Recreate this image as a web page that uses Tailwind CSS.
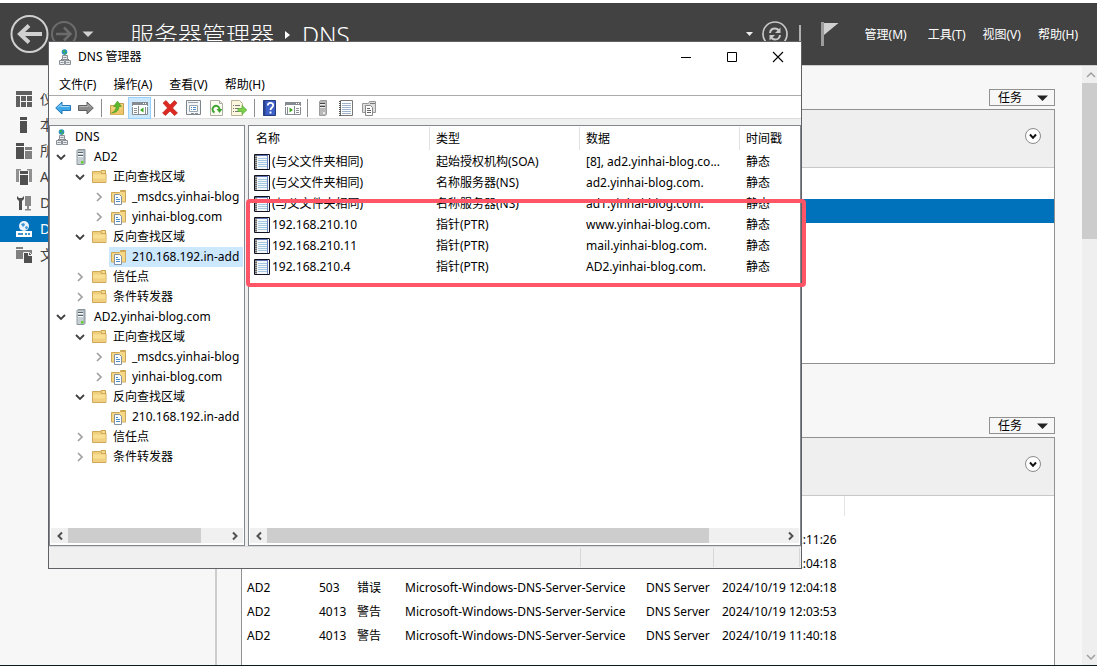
<!DOCTYPE html>
<html lang="zh-CN">
<head>
<meta charset="utf-8">
<title>服务器管理器 - DNS</title>
<meta name="viewport" content="width=device-width, initial-scale=1">
<script src="https://cdn.jsdelivr.net/npm/@tailwindcss/browser@4"></script>
</head>
<body class="relative flex h-screen flex-col overflow-hidden border-t-3 border-b border-t-white border-b-[#0a1a20] bg-[#f7f7f7] font-['Noto_Sans','Noto_Sans_CJK_SC',sans-serif] text-xs text-black">

<svg class="hidden" aria-hidden="true">
  <symbol id="dns" viewBox="0 0 16 16">
    <circle cx="7.500" cy="3" r="2.800" fill="#2b8fc4"/><path d="M5.500 1.600L7.500 1l1 1.500-2 1.500zM7.500 4.500l2-1 .300 1.300-1.500 1z" fill="#3cb54a"/>
    <path d="M7.500 5.500v1M4 10.500h8" stroke="#777"/><path d="M5.500 6.500h5v4h-5z" fill="#e8eaec" stroke="#8a9096"/><path d="M2.500 11.500h5v4h-5zM8.500 11.500h5v4h-5z" fill="#e8eaec" stroke="#8a9096"/><path d="M6.500 8.500h3M3.500 13.500h3M9.500 13.500h3" stroke="#9098a0"/>
  </symbol>
  <symbol id="server" viewBox="0 0 16 16">
    <path d="M4 1.500L5 .500h7v14l-1 1H4z" fill="#a9b4bb" stroke="#8b979e"/><path d="M4.500 2h6v13h-6z" fill="#c5ced3"/><path d="M5 3.500h5M5 6.500h5" stroke="#56646e"/><path d="M5 4.500h5M5 7.500h5" stroke="#fff"/><path d="M8 12h2.500v2.500H8z" fill="#62d32c"/>
  </symbol>
  <symbol id="folder" viewBox="0 0 16 16">
    <path d="M9 1.500h4.500v3H9z" fill="#f3dc8f" stroke="#c9a24a"/><path d="M.500 2.500h8l1 2h4.500v9H.500z" fill="#f0d07c" stroke="#cfa85a"/><path d="M1 5.500h12.500V13H1z" fill="#f8df94"/><path d="M1 9.500h12.500V13H1z" fill="#f0d080"/>
  </symbol>
  <symbol id="zone" viewBox="0 0 16 16">
    <path d="M9.500 1.500h5v3h-5z" fill="#f3dc8f" stroke="#c9a24a"/><path d="M.500 3.500h8l1-1h5v10.500H.500z" fill="#f4d888" stroke="#cfa85a"/><path d="M3.500 5.500h5l2 2v8h-7z" fill="#fff" stroke="#8392a5"/><path d="M5 8.500h2M5 10.500h4M5 12.500h4" stroke="#4a8ccc"/>
  </symbol>
  <symbol id="record" viewBox="0 0 16 16">
    <path d="M.500.500h15v15H.500z" fill="#f5f8fb" stroke="#10131f"/><path d="M3 1h11v1H3z" fill="#5f74b8"/><path d="M13.500 1v14" stroke="#6d86c4"/><path d="M4 4.500h9M4 6.500h9M4 8.500h9M4 10.500h9M4 12.500h9" stroke="#a3c8e2"/><path d="M2 1v14" stroke="#aaa" stroke-width="2"/><path d="M2 1v14" stroke="#666" stroke-width="2" stroke-dasharray="1 1"/>
  </symbol>
  <symbol id="open" viewBox="0 0 16 16"><path d="M4 6l4 4 4-4" fill="none" stroke="#404040" stroke-width="1.800"/></symbol>
  <symbol id="closed" viewBox="0 0 16 16"><path d="M6 4l4 4-4 4" fill="none" stroke="#a0a0a0" stroke-width="1.700"/></symbol>
  <symbol id="left" viewBox="0 0 16 16"><path d="M10.500 4.500L7 8l3.500 3.500" fill="none" stroke="#505050" stroke-width="2"/></symbol>
  <symbol id="right" viewBox="0 0 16 16"><path d="M6.500 4.500L10 8l-3.500 3.500" fill="none" stroke="#505050" stroke-width="2"/></symbol>
  <symbol id="expand" viewBox="0 0 16 16"><circle cx="8" cy="8" r="7.500" fill="#fff" stroke="#8a8a8a"/><path d="M5 6.500L8 9.800l3-3.300" fill="none" stroke="#111" stroke-width="2"/></symbol>
</svg>

<!-- Server Manager header -->
<header class="flex h-[63px] shrink-0 items-center border-b border-[#cfcfcf] bg-[#424242] pr-[19px] pl-[10px] text-white">
  <button aria-label="后退"><svg class="size-10" viewBox="0 0 40 40" fill="none"><circle cx="19.500" cy="20" r="18" stroke="#d0d0d0" stroke-width="2"/><path d="M9 20h23M19 11.500L10 20l9 8.500" stroke="#d0d0d0" stroke-width="4"/></svg></button>
  <button aria-label="前进"><svg class="size-7" viewBox="0 0 28 28" fill="none"><circle cx="14" cy="14" r="12" stroke="#6c6c6c" stroke-width="2"/><path d="M6 14h15M14 7.500l6.500 6.500-6.500 6.500" stroke="#6c6c6c" stroke-width="2.500"/></svg></button>
  <button class="ml-1" aria-label="历史记录"><svg class="h-[6px] w-3" viewBox="0 0 12 6"><path d="M.500.500h11L6 6z" fill="#d0d0d0"/></svg></button>
  <h1 class="ml-9 flex items-center pt-px text-2xl leading-8 font-light">服务器管理器<svg class="ml-[11px] h-2 w-[5px]" viewBox="0 0 5 8"><path d="M0 0l5 4-5 4z" fill="#fff"/></svg><span class="ml-3">DNS</span></h1>
  <div class="ml-auto flex items-center">
    <button aria-label="更多"><svg class="h-1 w-[7px]" viewBox="0 0 7 4"><path d="M0 0h7L3.500 4z" fill="#eee"/></svg></button>
    <button class="ml-[9px]" aria-label="刷新"><svg class="size-[26px]" viewBox="0 0 26 26" fill="none"><circle cx="13" cy="13" r="12" stroke="#c8c8c8" stroke-width="1.700"/><path d="M8 12c.300-3 2.500-4.500 5-4.500 2 0 3 .800 4 2M18 14c-.300 3-2.500 4.500-5 4.500-2 0-3-.800-4-2" stroke="#c8c8c8" stroke-width="2"/><path d="M18.500 6.500V12H13zM7.500 19.500V14H13z" fill="#c8c8c8"/></svg></button>
    <span class="ml-[11px] h-[18px] w-0.5 bg-[#b0b0b0]"></span>
    <button class="ml-5" aria-label="通知"><svg class="h-6 w-[18px]" viewBox="0 0 18 24"><path d="M0 0h3v24H0z" fill="#9c9c9c"/><path d="M3 1h14.500L3 13z" fill="#d0d0d0"/></svg></button>
    <nav class="ml-[26px] flex gap-[17px] pt-0.5 leading-5">
      <button class="mr-1">管理(M)</button><button>工具(T)</button><button>视图(V)</button><button>帮助(H)</button>
    </nav>
  </div>
</header>

<div class="flex min-h-0 flex-1">
  <aside class="w-[217px] shrink-0 border-r-2 border-[#cdcdcd] pt-5">
    <ul class="text-sm leading-[26px] text-[#404040]">
      <li><a href="#" class="flex h-[26px] items-center gap-2 pl-4"><svg class="size-4" viewBox="0 0 16 16" fill="#606060"><path d="M0 0h16v4H0zM0 5h4v11H0zM5 5h5v5H5zM11 5h5v5h-5zM5 11h5v5H5zM11 11h5v5h-5z"/></svg>仪表板</a></li>
      <li><a href="#" class="flex h-[26px] items-center gap-2 pl-4"><svg class="size-4" viewBox="0 0 16 16" fill="#505050"><path d="M4 0h7v3H4zM4 4h7v12H4z"/></svg>本地服务器</a></li>
      <li><a href="#" class="flex h-[26px] items-center gap-2 pl-4"><svg class="size-4" viewBox="0 0 16 16" fill="#505050"><path d="M0 0h8v3H0zM0 4h8v12H0z"/><path d="M9 4h7v3H9zM9 8h7v8H9z" fill="#808080"/></svg>所有服务器</a></li>
      <li><a href="#" class="flex h-[26px] items-center gap-2 pl-4"><svg class="size-4" viewBox="0 0 16 16" fill="#505050"><path d="M4 2h8v3H4zM4 6h8v10H4z"/><path d="M0 0h5v1.500H3V13H0zM16 0h-5v1.500h2V13h3z" fill="#909090"/></svg>AD DS</a></li>
      <li><a href="#" class="flex h-[26px] items-center gap-2 pl-4"><svg class="size-4" viewBox="0 0 16 16" fill="#505050"><path d="M1 1v3l2 2v9h3V6l2-2V1L6 3H3z"/><path d="M9 1h6v10H9zM11 11h2v3h2v1.500H9V14h2z" fill="#888"/></svg>DHCP</a></li>
      <li><a href="#" aria-current="page" class="flex h-[26px] items-center gap-2 bg-[#0072bc] pl-4 text-white"><svg class="size-4" viewBox="0 0 16 16"><circle cx="8" cy="5" r="5" fill="#e8f3fb"/><path d="M5 3l3-1 1 2-2 2zM9 6l2-1 1 2-2 1.500z" fill="#3a94d0"/><path d="M0 10h16v6H0z" fill="#fff"/><path d="M2 13h5M9 13h2M12 13h2" stroke="#0072bc" stroke-width="1.500"/></svg>DNS</a></li>
      <li><a href="#" class="flex h-[26px] items-center gap-2 pl-4"><svg class="size-4" viewBox="0 0 16 16"><path d="M0 0h7v2H0zM0 3h16v9H0z" fill="#808080"/><path d="M7.500 5.500h6l3 3v8h-9z" fill="#505050" stroke="#f7f7f7"/><path d="M12.500 5.500v3H16" fill="none" stroke="#f7f7f7"/></svg>文件和存储服务</a></li>
    </ul>
  </aside>

  <main class="flex min-w-0 flex-1 flex-col bg-[#f7f7f7] pt-[23px] pr-[27px] pl-6">
    <button class="flex h-[17px] w-[66px] shrink-0 items-center justify-between self-end border border-[#919191] pr-[6px] pl-2 leading-4">任务<svg class="h-[6px] w-[11px]" viewBox="0 0 11 6"><path d="M0 .500h11L5.500 6z" fill="#222"/></svg></button>
    <section class="mt-[3px] h-[255px] shrink-0 border border-[#919191] bg-white" aria-label="服务器">
      <div class="flex h-[58px] items-center justify-end border-b border-[#c8c8c8] bg-[#efefef] pr-[13px] pb-[6px]"><button aria-label="展开"><svg class="size-4"><use href="#expand"/></svg></button></div>
      <div class="mt-[31px] h-6 bg-[#0072bc]"></div>
    </section>

    <button class="mt-[53px] flex h-[17px] w-[66px] shrink-0 items-center justify-between self-end border border-[#919191] pr-[6px] pl-2 leading-4">任务<svg class="h-[6px] w-[11px]" viewBox="0 0 11 6"><path d="M0 .500h11L5.500 6z" fill="#222"/></svg></button>
    <section class="mt-[3px] min-h-0 flex-1 overflow-hidden border border-b-0 border-[#919191] bg-white" aria-label="事件">
      <div class="flex h-[58px] items-center justify-end border-b border-[#c8c8c8] bg-[#efefef] pr-[13px] pb-[6px]"><button aria-label="展开"><svg class="size-4"><use href="#expand"/></svg></button></div>
      <div class="h-8"><div class="h-5 w-[603px] border-r border-[#e4e4e4]"></div></div>
      <table class="w-full table-fixed border-collapse text-left whitespace-nowrap">
        <colgroup><col class="w-[77px]"><col class="w-[38px]"><col class="w-12"><col class="w-[241px]"><col class="w-[76px]"><col></colgroup>
        <tbody>
          <tr class="h-6"><td class="pl-[5px]">AD2</td><td>4013</td><td>警告</td><td>Microsoft-Windows-DNS-Server-Service</td><td>DNS Server</td><td>2024/10/19 12:11:26</td></tr>
          <tr class="h-6"><td class="pl-[5px]">AD2</td><td>503</td><td>错误</td><td>Microsoft-Windows-DNS-Server-Service</td><td>DNS Server</td><td>2024/10/19 12:04:18</td></tr>
          <tr class="h-6"><td class="pl-[5px]">AD2</td><td>503</td><td>错误</td><td>Microsoft-Windows-DNS-Server-Service</td><td>DNS Server</td><td>2024/10/19 12:04:18</td></tr>
          <tr class="h-6"><td class="pl-[5px]">AD2</td><td>4013</td><td>警告</td><td>Microsoft-Windows-DNS-Server-Service</td><td>DNS Server</td><td>2024/10/19 12:03:53</td></tr>
          <tr class="h-6"><td class="pl-[5px]">AD2</td><td>4013</td><td>警告</td><td>Microsoft-Windows-DNS-Server-Service</td><td>DNS Server</td><td>2024/10/19 11:40:18</td></tr>
        </tbody>
      </table>
    </section>
  </main>

  <div class="flex w-[15px] shrink-0 flex-col bg-[#efefef]" aria-hidden="true">
    <svg class="h-[17px] w-[15px] shrink-0" viewBox="0 0 15 17"><path d="M5 11l4-4 4 4" fill="none" stroke="#a0a0a0" stroke-width="1.500"/></svg>
    <div class="h-[156px] bg-[#cccccc]"></div>
    <svg class="mt-auto h-[17px] w-[15px] shrink-0" viewBox="0 0 15 17"><path d="M5 7l4 4 4-4" fill="none" stroke="#a0a0a0" stroke-width="1.500"/></svg>
  </div>
</div>

<!-- DNS Manager window -->
<div role="dialog" aria-label="DNS 管理器" class="absolute top-[38px] left-12 flex h-[528px] w-[754px] flex-col border border-[#5f6165] bg-white">
  <div class="flex h-[30px] shrink-0 items-center pr-[17px] pb-px pl-2">
    <svg class="size-4"><use href="#dns"/></svg>
    <h2 class="ml-[5px] pt-px leading-5">DNS 管理器</h2>
    <div class="ml-auto flex items-center gap-[34px]">
      <button aria-label="最小化"><svg class="h-3 w-3" viewBox="0 0 12 12"><path d="M1 6.500h10" stroke="#000"/></svg></button>
      <button aria-label="最大化"><svg class="h-3 w-3" viewBox="0 0 12 12"><path d="M1.500 1.500h9v9h-9z" fill="none" stroke="#000"/></svg></button>
      <button aria-label="关闭"><svg class="h-3 w-3" viewBox="0 0 12 12"><path d="M1 1l10 10M11 1L1 11" stroke="#000" stroke-width="1.100"/></svg></button>
    </div>
  </div>
  <nav class="flex h-6 shrink-0 items-center gap-[17px] border-b border-[#ababab] pt-0.5 pl-[10px] leading-5">
    <button>文件(F)</button><button>操作(A)</button><button>查看(V)</button><button>帮助(H)</button>
  </nav>
  <div class="flex h-[23px] shrink-0 items-center border-b border-[#dcdcdc] pt-px pl-0.5">
    <button class="flex w-[23px] justify-center" aria-label="后退"><svg class="size-4" viewBox="0 0 16 16"><path d="M.700 8L7 2v3.500h8.500v5H7V14z" fill="#3fa9e8" stroke="#2477b8"/><path d="M3 7.500L6 4.500v2h8.500" fill="none" stroke="#a5dcfa"/></svg></button>
    <button class="flex w-[23px] justify-center" aria-label="前进"><svg class="size-4" viewBox="0 0 16 16"><path d="M15.300 8L9 2v3.500H.500v5H9V14z" fill="#8c8c8c" stroke="#5e5e5e"/><path d="M13 7.500L10 4.500v2H1.500" fill="none" stroke="#b8b8b8"/></svg></button>
    <span class="flex w-2 justify-center"><span class="h-[18px] w-px bg-[#8d8d8d]"></span></span>
    <button class="flex w-[23px] justify-center" aria-label="向上"><svg class="size-4" viewBox="0 0 16 16"><path d="M1.500 5.500h5l1.500-2h6.500v11h-13z" fill="#f2d27c" stroke="#c79f4a"/><path d="M2 9.500h12v5H2z" fill="#eec66a"/><path d="M2.500 13c3-1 4.500-3.500 4.500-6.500H4.500L8.500 1l4 5.500H10C10 10.500 7 13 2.500 13z" fill="#5cb82c" stroke="#3f931c" stroke-width=".500"/></svg></button>
    <button aria-pressed="true" class="flex h-[22px] w-[23px] items-center justify-center border border-[#99d1ff] bg-[#cce8ff]" aria-label="显示控制台树"><svg class="size-4 shrink-0" viewBox="0 0 16 16"><path d="M.500 2.500h15v12H.500z" fill="#fff" stroke="#858b91"/><path d="M0 2h16v3H0z" fill="#858b91"/><path d="M11 3.500h1M13 3.500h1M0 6.500h16" stroke="#fff"/><path d="M6.500 6v8" stroke="#858b91"/><path d="M2 8.500h3M2 10.500h3M2 12.500h3M13.500 7v7" stroke="#8a8f96"/><path d="M11.500 7.500v5L8 10z" fill="#3da51f"/></svg></button>
    <span class="flex w-[7px] justify-center"><span class="h-[18px] w-px bg-[#8d8d8d]"></span></span>
    <button class="flex w-[23px] justify-center" aria-label="删除"><svg class="size-4" viewBox="0 0 16 16"><path d="M1 3l3-2.500L8 5l4.500-4.500L15 3l-4.500 5L15.500 13 12.500 15.500 8 11l-4.500 4.500L.500 13 5.500 8z" fill="#dc2a22" stroke="#b31712" stroke-width=".600"/></svg></button>
    <button class="flex w-[23px] justify-center" aria-label="属性"><svg class="size-4" viewBox="0 0 16 16"><path d="M1.500.500h14v14h-14z" fill="#f4f5f6" stroke="#7d858c"/><path d="M3 2.500h10M4.500 5.500h8v6h-8z" fill="#fff" stroke="#9aa4ad"/><path d="M6 7.500h1M8 7.500h3M6 9.500h1M8 9.500h3" stroke="#4a8ccc"/><path d="M6 13.500h3M10 13.500h3" stroke="#8a949c"/></svg></button>
    <button class="flex w-[23px] justify-center" aria-label="刷新"><svg class="size-4" viewBox="0 0 16 16"><path d="M2.500.500h9l3 3v12h-12z" fill="#fdfcf4" stroke="#b0aea0"/><path d="M11.500.500v3h3" fill="#ddd" stroke="#b0aea0"/><path d="M6.500 12.500A3.500 3.500 0 1 1 11.500 9" fill="none" stroke="#3da52f" stroke-width="2"/><path d="M8.500 9h6l-3 4z" fill="#3da52f"/></svg></button>
    <button class="flex w-[23px] justify-center" aria-label="导出列表"><svg class="size-4" viewBox="0 0 16 16"><path d="M.500.500h8l3 3v12H.500z" fill="#fbf7de" stroke="#b9b294"/><path d="M2 5.500h1M4 5.500h5M2 8.500h1M4 8.500h4M2 11.500h1M4 11.500h4" stroke="#777"/><path d="M7 8.500h4V5.500l4.800 4.500-4.800 4.500v-3H7z" fill="#7fd14d" stroke="#4da52c" stroke-width=".700"/></svg></button>
    <span class="flex w-2 justify-center"><span class="h-[18px] w-px bg-[#8d8d8d]"></span></span>
    <button class="flex w-[23px] justify-center" aria-label="帮助"><svg class="size-4" viewBox="0 0 16 16"><path d="M1.500.500h12v15h-12z" fill="#3d5fc8" stroke="#25397f"/><path d="M1.500.500h2v15h-2z" fill="#2a438f"/><path d="M5.800 5.500C5.800 2 11.200 2 11.200 5.300 11.200 7.500 8.500 7.500 8.500 10" fill="none" stroke="#fff" stroke-width="1.800"/><path d="M7.500 11.500h2v2h-2z" fill="#fff"/></svg></button>
    <button class="flex w-[23px] justify-center" aria-label="显示操作窗格"><svg class="size-4" viewBox="0 0 16 16"><path d="M.500 2.500h15v12H.500z" fill="#fff" stroke="#858b91"/><path d="M0 2h16v3H0z" fill="#858b91"/><path d="M11 3.500h1M13 3.500h1M0 6.500h16" stroke="#fff"/><path d="M9.500 6v8M2.500 7v7" stroke="#858b91"/><path d="M11 8.500h3M11 10.500h3M11 12.500h3" stroke="#8a8f96"/><path d="M4.500 7.500v5L8 10z" fill="#3da51f"/></svg></button>
    <span class="flex w-[7px] justify-center"><span class="h-[18px] w-px bg-[#8d8d8d]"></span></span>
    <button class="flex w-[23px] justify-center" aria-label="服务器"><svg class="size-4" viewBox="0 0 16 16"><path d="M4.500 1.500l1-1h6v14l-1 1h-6z" fill="#b8b8b8" stroke="#9c9c9c"/><path d="M5 3.500h5M5 6.500h5" stroke="#444"/><path d="M5 4.500h5M5 7.500h5" stroke="#eee"/><path d="M8 12h2v2H8z" fill="#e8e8e8"/></svg></button>
    <button class="flex w-[23px] justify-center" aria-label="记录"><svg class="size-4" viewBox="0 0 16 16"><path d="M2.500.500h12v15h-12z" fill="#fff" stroke="#777"/><path d="M4 3.500h9M4 5.500h9M4 7.500h9M4 9.500h9M4 11.500h9M4 13.500h9" stroke="#9db4cc"/><path d="M2 1v15" stroke="#555" stroke-width="2" stroke-dasharray="1 1"/></svg></button>
    <button class="flex w-[23px] justify-center" aria-label="区域"><svg class="size-4" viewBox="0 0 16 16"><path d="M1.500 3.500h6l1-2h6v11h-13z" fill="#dedede" stroke="#999"/><path d="M9 3.500h5" stroke="#777"/><path d="M4.500 5.500h5l2 2v8h-7z" fill="#fff" stroke="#888"/><path d="M6 8.500h3M6 10.500h4M6 12.500h4" stroke="#666"/></svg></button>
  </div>

  <div class="flex min-h-0 flex-1 gap-[3px] bg-[#f0f0f0] pt-[6px]">
    <div class="flex w-[196px] shrink-0 flex-col overflow-hidden border border-[#828790] bg-white">
      <ul role="tree" class="flex-1 pt-px leading-5 whitespace-nowrap">
        <li role="treeitem" class="flex h-5 items-center gap-[5px] pl-1"><svg class="size-4 shrink-0"><use href="#dns"/></svg>DNS</li>
        <li role="treeitem" class="flex h-5 items-center gap-0.5 pl-[3px]"><svg class="size-4 shrink-0"><use href="#open"/></svg><span class="flex items-center gap-[5px] pl-0.5"><svg class="size-4 shrink-0"><use href="#server"/></svg>AD2</span></li>
        <li role="treeitem" class="flex h-5 items-center gap-0.5 pl-[22px]"><svg class="size-4 shrink-0"><use href="#open"/></svg><span class="flex items-center gap-[5px] pl-0.5"><svg class="size-4 shrink-0"><use href="#folder"/></svg>正向查找区域</span></li>
        <li role="treeitem" class="flex h-5 items-center gap-0.5 pl-[41px]"><svg class="size-4 shrink-0"><use href="#closed"/></svg><span class="flex w-[134px] items-center gap-[5px] overflow-hidden pl-0.5"><svg class="size-4 shrink-0"><use href="#zone"/></svg>_msdcs.yinhai-blog</span></li>
        <li role="treeitem" class="flex h-5 items-center gap-0.5 pl-[41px]"><svg class="size-4 shrink-0"><use href="#closed"/></svg><span class="flex items-center gap-[5px] pl-0.5"><svg class="size-4 shrink-0"><use href="#zone"/></svg>yinhai-blog.com</span></li>
        <li role="treeitem" class="flex h-5 items-center gap-0.5 pl-[22px]"><svg class="size-4 shrink-0"><use href="#open"/></svg><span class="flex items-center gap-[5px] pl-0.5"><svg class="size-4 shrink-0"><use href="#folder"/></svg>反向查找区域</span></li>
        <li role="treeitem" aria-selected="true" class="flex h-5 items-center pl-[59px]"><span class="flex w-[134px] items-center gap-[5px] overflow-hidden bg-[#cce8ff] pl-0.5"><svg class="size-4 shrink-0"><use href="#zone"/></svg>210.168.192.in-add</span></li>
        <li role="treeitem" class="flex h-5 items-center gap-0.5 pl-[22px]"><svg class="size-4 shrink-0"><use href="#closed"/></svg><span class="flex items-center gap-[5px] pl-0.5"><svg class="size-4 shrink-0"><use href="#folder"/></svg>信任点</span></li>
        <li role="treeitem" class="flex h-5 items-center gap-0.5 pl-[22px]"><svg class="size-4 shrink-0"><use href="#closed"/></svg><span class="flex items-center gap-[5px] pl-0.5"><svg class="size-4 shrink-0"><use href="#folder"/></svg>条件转发器</span></li>
        <li role="treeitem" class="flex h-5 items-center gap-0.5 pl-[3px]"><svg class="size-4 shrink-0"><use href="#open"/></svg><span class="flex items-center gap-[5px] pl-0.5"><svg class="size-4 shrink-0"><use href="#server"/></svg>AD2.yinhai-blog.com</span></li>
        <li role="treeitem" class="flex h-5 items-center gap-0.5 pl-[22px]"><svg class="size-4 shrink-0"><use href="#open"/></svg><span class="flex items-center gap-[5px] pl-0.5"><svg class="size-4 shrink-0"><use href="#folder"/></svg>正向查找区域</span></li>
        <li role="treeitem" class="flex h-5 items-center gap-0.5 pl-[41px]"><svg class="size-4 shrink-0"><use href="#closed"/></svg><span class="flex w-[134px] items-center gap-[5px] overflow-hidden pl-0.5"><svg class="size-4 shrink-0"><use href="#zone"/></svg>_msdcs.yinhai-blog</span></li>
        <li role="treeitem" class="flex h-5 items-center gap-0.5 pl-[41px]"><svg class="size-4 shrink-0"><use href="#closed"/></svg><span class="flex items-center gap-[5px] pl-0.5"><svg class="size-4 shrink-0"><use href="#zone"/></svg>yinhai-blog.com</span></li>
        <li role="treeitem" class="flex h-5 items-center gap-0.5 pl-[22px]"><svg class="size-4 shrink-0"><use href="#open"/></svg><span class="flex items-center gap-[5px] pl-0.5"><svg class="size-4 shrink-0"><use href="#folder"/></svg>反向查找区域</span></li>
        <li role="treeitem" class="flex h-5 items-center pl-[59px]"><span class="flex w-[134px] items-center gap-[5px] overflow-hidden pl-0.5"><svg class="size-4 shrink-0"><use href="#zone"/></svg>210.168.192.in-add</span></li>
        <li role="treeitem" class="flex h-5 items-center gap-0.5 pl-[22px]"><svg class="size-4 shrink-0"><use href="#closed"/></svg><span class="flex items-center gap-[5px] pl-0.5"><svg class="size-4 shrink-0"><use href="#folder"/></svg>信任点</span></li>
        <li role="treeitem" class="flex h-5 items-center gap-0.5 pl-[22px]"><svg class="size-4 shrink-0"><use href="#closed"/></svg><span class="flex items-center gap-[5px] pl-0.5"><svg class="size-4 shrink-0"><use href="#folder"/></svg>条件转发器</span></li>
      </ul>
      <div class="mx-px mb-[2px] flex h-[15px] items-center bg-[#f0f0f0]" aria-hidden="true"><svg class="h-4 w-[17px] shrink-0" viewBox="0 0 16 16"><use href="#left"/></svg><span class="h-full w-[133px] bg-[#cdcdcd]"></span><svg class="ml-auto h-4 w-[17px] shrink-0" viewBox="0 0 16 16"><use href="#right"/></svg></div>
    </div>

    <div class="flex min-w-0 flex-1 flex-col border border-[#828790] bg-white">
      <div class="flex-1">
        <table class="w-full table-fixed border-collapse text-left whitespace-nowrap">
          <colgroup><col class="w-[181px]"><col class="w-[150px]"><col class="w-[160px]"><col></colgroup>
          <thead><tr class="h-[25px]"><th class="py-0 pl-[7px] font-normal"><span class="flex h-[23px] items-center border-r border-[#e2e2e2]">名称</span></th><th class="pl-[6px] font-normal"><span class="flex h-[23px] items-center border-r border-[#e2e2e2]">类型</span></th><th class="pl-[6px] font-normal"><span class="flex h-[23px] items-center border-r border-[#e2e2e2]">数据</span></th><th class="pl-[6px] font-normal">时间戳</th></tr></thead>
          <tbody>
            <tr class="h-[21px]"><td class="pl-[5px]"><span class="flex items-center gap-0.5"><svg class="size-4 shrink-0"><use href="#record"/></svg>(与父文件夹相同)</span></td><td class="pl-[6px]">起始授权机构(SOA)</td><td class="pl-[6px]">[8], ad2.yinhai-blog.co...</td><td class="pl-[6px]">静态</td></tr>
            <tr class="h-[21px]"><td class="pl-[5px]"><span class="flex items-center gap-0.5"><svg class="size-4 shrink-0"><use href="#record"/></svg>(与父文件夹相同)</span></td><td class="pl-[6px]">名称服务器(NS)</td><td class="pl-[6px]">ad2.yinhai-blog.com.</td><td class="pl-[6px]">静态</td></tr>
            <tr class="h-[21px]"><td class="pl-[5px]"><span class="flex items-center gap-0.5"><svg class="size-4 shrink-0"><use href="#record"/></svg>(与父文件夹相同)</span></td><td class="pl-[6px]">名称服务器(NS)</td><td class="pl-[6px]">ad1.yinhai-blog.com.</td><td class="pl-[6px]">静态</td></tr>
            <tr class="h-[21px]"><td class="pl-[5px]"><span class="flex items-center gap-0.5"><svg class="size-4 shrink-0"><use href="#record"/></svg>192.168.210.10</span></td><td class="pl-[6px]">指针(PTR)</td><td class="pl-[6px]">www.yinhai-blog.com.</td><td class="pl-[6px]">静态</td></tr>
            <tr class="h-[21px]"><td class="pl-[5px]"><span class="flex items-center gap-0.5"><svg class="size-4 shrink-0"><use href="#record"/></svg>192.168.210.11</span></td><td class="pl-[6px]">指针(PTR)</td><td class="pl-[6px]">mail.yinhai-blog.com.</td><td class="pl-[6px]">静态</td></tr>
            <tr class="h-[21px]"><td class="pl-[5px]"><span class="flex items-center gap-0.5"><svg class="size-4 shrink-0"><use href="#record"/></svg>192.168.210.4</span></td><td class="pl-[6px]">指针(PTR)</td><td class="pl-[6px]">AD2.yinhai-blog.com.</td><td class="pl-[6px]">静态</td></tr>
          </tbody>
        </table>
      </div>
      <div class="mx-px mb-[2px] flex h-[15px] items-center bg-[#f0f0f0]" aria-hidden="true"><svg class="h-4 w-[17px] shrink-0" viewBox="0 0 16 16"><use href="#left"/></svg><span class="h-full w-[442px] bg-[#cdcdcd]"></span><svg class="ml-auto h-4 w-[17px] shrink-0" viewBox="0 0 16 16"><use href="#right"/></svg></div>
    </div>
  </div>
  <div class="flex h-[22px] shrink-0 justify-end border-t border-[#d7d7d7] bg-[#f0f0f0] py-px pr-px"><span class="w-[133px] border-l border-[#d7d7d7]"></span><span class="w-[87px] border-x border-[#d7d7d7]"></span></div>
</div>

<!-- Highlight around the pointer records -->
<div class="absolute top-[196px] left-[246px] h-[88px] w-[560px] rounded-sm border-4 border-[#ff5566]"></div>
</body>
</html>
